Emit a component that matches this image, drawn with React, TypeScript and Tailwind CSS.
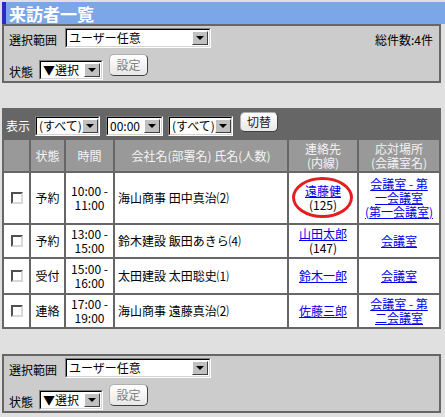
import React from "react";

function Arrow() {
  return (
    <div className="flex h-full w-[16px] items-center justify-center border border-t-white border-l-white border-b-[#404040] border-r-[#404040] bg-[#c0c0c0]">
      <div className="h-0 w-0 border-x-[4px] border-t-[4px] border-x-transparent border-t-black" />
    </div>
  );
}

function Select({ w, text }: { w: string; text: string }) {
  return (
    <div className={`${w} h-[20px] border border-t-[#808080] border-l-[#808080] border-b-white border-r-white`}>
      <div className="flex h-full items-center border border-t-black border-l-black border-b-[#d4d4d4] border-r-[#d4d4d4] bg-white pl-[2px] pr-[1px]">
        <span className="flex-1 whitespace-nowrap text-[12px] leading-[16px] text-black">{text}</span>
        <div className="h-[14px]">
          <Arrow />
        </div>
      </div>
    </div>
  );
}

function Btn({ label, w, h, dim }: { label: string; w: string; h: string; dim?: boolean }) {
  return (
    <div
      className={`${w} ${h} flex items-center justify-center rounded-[5px] border border-t-[#b0b0b0] border-l-[#b0b0b0] border-b-[#404040] border-r-[#404040] bg-gradient-to-b from-white to-[#e8e8e8] text-[12px] leading-[14px] ${dim ? "text-[#808080]" : "text-[#222]"}`}
    >
      {label}
    </div>
  );
}

function FilterPanel({ showCount }: { showCount?: boolean }) {
  return (
    <div className="h-[59px] w-[439px] border-2 border-[#666] bg-[#cccccc] px-[5px] pt-[2px] text-[12px] leading-[14px] text-black">
      <div className="flex h-[20px] items-center">
        <span className="mt-[3px] w-[56px]">選択範囲</span>
        <Select w="w-[146px]" text="ユーザー任意" />
        {showCount && <span className="ml-auto mt-[4px] pr-[1px]">総件数:4件</span>}
      </div>
      <div className="mt-[6px] flex h-[26px] items-start">
        <span className="mt-[11px] w-[30px]">状態</span>
        <div className="mt-[6px]">
          <Select w="w-[64px]" text="▼選択" />
        </div>
        <div className="ml-[6px]">
          <Btn label="設定" w="w-[39px]" h="h-[22px]" dim />
        </div>
      </div>
    </div>
  );
}

function Check() {
  return <div className="mx-auto h-[12px] w-[12px] border-2 border-t-[#505050] border-l-[#505050] border-b-[#d8d8d8] border-r-[#d8d8d8] bg-white" />;
}

function Lk({ children }: { children: React.ReactNode }) {
  return <span className="text-[#0000ee] underline">{children}</span>;
}

const rows = [
  { st: "予約", t1: "10:00 -", t2: "11:00", co: "海山商事 田中真治⑵", h: "h-[50px]", circle: true, name: "遠藤健", ext: "(125)", place: ["会議室 - 第", "一会議室", "(第一会議室)"] },
  { st: "予約", t1: "13:00 -", t2: "15:00", co: "鈴木建設 飯田あきら⑷", h: "h-[32px]", name: "山田太郎", ext: "(147)", place: ["会議室"] },
  { st: "受付", t1: "15:00 -", t2: "16:00", co: "太田建設 太田聡史⑴", h: "h-[34px]", name: "鈴木一郎", place: ["会議室"] },
  { st: "連絡", t1: "17:00 -", t2: "19:00", co: "海山商事 遠藤真治⑵", h: "h-[32px]", name: "佐藤三郎", place: ["会議室 - 第", "二会議室"] },
];

export default function App() {
  return (
    <div className="h-[417px] w-[445px] overflow-hidden bg-[#e0e0e0] pl-[2px] pt-[2px] font-['Noto_Sans_CJK_JP',sans-serif]">
      <div className="flex h-[22px] w-[443px] items-center border-l-[4px] border-[#2a2ac8] bg-[#7ba7e8] pl-[3px] text-[17px] font-bold leading-none text-white">
        来訪者一覧
      </div>
      <FilterPanel showCount />

      <div className="mt-[25px] w-[439px] bg-[#666]">
        <div className="flex h-[30px] items-end pb-[2px] pl-[4px] text-[12px] leading-[14px] text-white">
          <span className="mb-[3px] w-[29px]">表示</span>
          <Select w="w-[65px]" text="(すべて)" />
          <div className="ml-[6px]">
            <Select w="w-[57px]" text="00:00" />
          </div>
          <div className="ml-[5px]">
            <Select w="w-[65px]" text="(すべて)" />
          </div>
          <div className="mb-[4px] ml-[7px]">
            <Btn label="切替" w="w-[38px]" h="h-[20px]" />
          </div>
        </div>
        <table className="w-[439px] table-fixed border-separate border-spacing-[2px] text-[12px] leading-[14px]">
          <colgroup>
            <col className="w-[25px]" />
            <col className="w-[33px]" />
            <col className="w-[47px]" />
            <col className="w-[172px]" />
            <col className="w-[68px]" />
            <col className="w-[80px]" />
          </colgroup>
          <thead>
            <tr className="h-[31px] bg-[#999] text-center text-[#f4f4f4]">
              <th className="p-0 font-normal" />
              <th className="p-0 font-normal">状態</th>
              <th className="p-0 font-normal">時間</th>
              <th className="p-0 font-normal">会社名(部署名) 氏名(人数)</th>
              <th className="p-0 font-normal">
                連絡先
                <br />
                (内線)
              </th>
              <th className="p-0 font-normal">
                応対場所
                <br />
                (会議室名)
              </th>
            </tr>
          </thead>
          <tbody>
            {rows.map((r) => (
              <tr key={r.name} className={`${r.h} bg-white text-black`}>
                <td className="p-0">
                  <Check />
                </td>
                <td className="p-0 text-center">{r.st}</td>
                <td className="p-0 text-center">
                  {r.t1}
                  <br />
                  {r.t2}
                </td>
                <td className="whitespace-nowrap py-0 pl-[3px]">{r.co}</td>
                <td className="relative p-0 text-center">
                  <Lk>{r.name}</Lk>
                  {r.ext && (
                    <>
                      <br />
                      {r.ext}
                    </>
                  )}
                  {r.circle && (
                    <div className="absolute bottom-[5px] left-[3px] right-[4px] top-[4px] rounded-[50%] border-[3px] border-[#e41e1e] blur-[0.5px]" />
                  )}
                </td>
                <td className="p-0 text-center">
                  <Lk>
                    {r.place.map((p, i) => (
                      <React.Fragment key={i}>
                        {i > 0 && <br />}
                        {p}
                      </React.Fragment>
                    ))}
                  </Lk>
                </td>
              </tr>
            ))}
          </tbody>
        </table>
      </div>

      <div className="mt-[25px]">
        <FilterPanel />
      </div>
    </div>
  );
}
